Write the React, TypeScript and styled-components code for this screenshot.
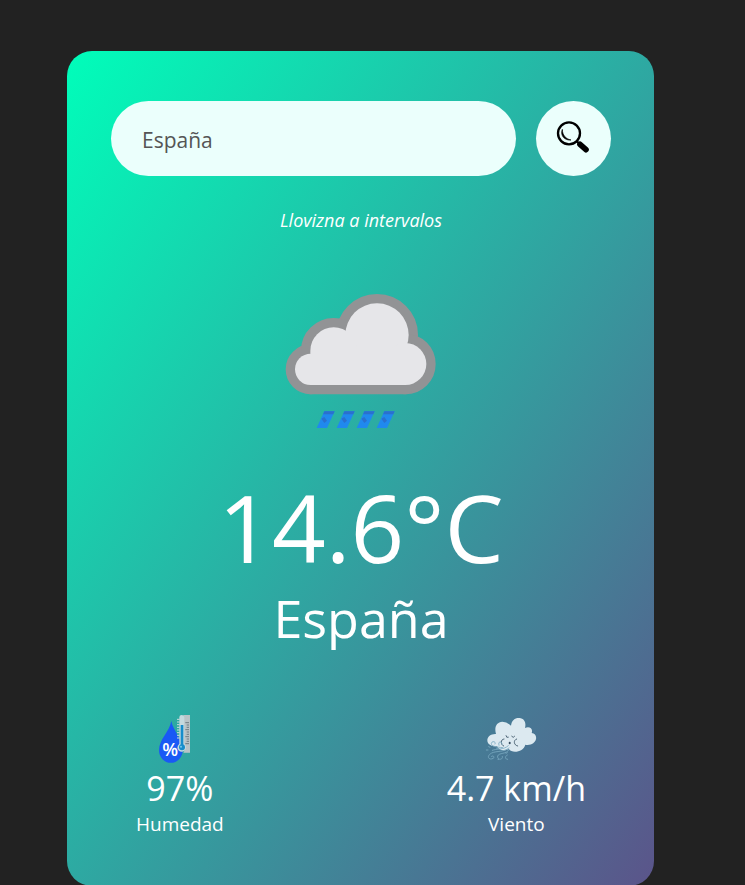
import React, { useState } from "react";
import styled, { createGlobalStyle } from "styled-components";

const GlobalStyle = createGlobalStyle`
  * {
    box-sizing: border-box;
    margin: 0;
    padding: 0;
  }
  body {
    background: #222;
    font-family: "Segoe UI", "Open Sans", "Noto Sans", sans-serif;
  }
`;

const Page = styled.main`
  padding: 51px 24px 0 0;
`;

const Card = styled.section`
  width: 90%;
  max-width: 587px;
  margin: 0 auto;
  padding: 50px 43px 48px 44px;
  border-radius: 25px;
  background: linear-gradient(to bottom right, #00feba, #5b548a);
  color: #fff;
  text-align: center;
`;

const SearchForm = styled.form`
  display: flex;
  align-items: center;
  gap: 20px;
`;

const SearchInput = styled.input`
  flex: 1;
  min-width: 0;
  height: 75px;
  padding: 2px 31px 0;
  border: 0;
  outline: 0;
  border-radius: 38px;
  background: #ebfffc;
  color: #555;
  font-family: inherit;
  font-size: 21px;
`;

const SearchButton = styled.button`
  display: flex;
  align-items: center;
  justify-content: center;
  width: 75px;
  height: 75px;
  flex-shrink: 0;
  border: 0;
  border-radius: 50%;
  background: #ebfffc;
  cursor: pointer;
`;

const Condition = styled.p`
  margin-top: 31px;
  font-size: 18px;
  font-style: italic;
  line-height: 26px;
`;

const ConditionIcon = styled.svg`
  display: block;
  width: 160px;
  height: 160px;
  margin: 48px auto 32px;
`;

const Temperature = styled.h1`
  font-size: 94px;
  font-weight: 400;
  line-height: 108px;
`;

const City = styled.h2`
  font-size: 52px;
  font-weight: 400;
  line-height: 74px;
`;

const Details = styled.div`
  display: flex;
  justify-content: space-between;
  margin-top: 59px;
  padding: 0 25px;
`;

const Detail = styled.div`
  display: flex;
  flex-direction: column;
  align-items: center;
`;

const DetailIcon = styled.svg<{ $width: number }>`
  width: ${(p) => p.$width}px;
  height: 50px;
  margin: 0 10px 2px 0;
`;

const DetailValue = styled.p`
  font-size: 34px;
  line-height: 44px;
`;

const DetailLabel = styled.p`
  font-size: 19px;
  line-height: 28px;
`;

const CloudShape = () => (
  <>
    <circle cx="320" cy="165" r="95" />
    <circle cx="405" cy="252" r="63" />
    <circle cx="121" cy="268" r="47" />
    <circle cx="190" cy="212" r="70" />
    <rect x="121" y="215" width="284" height="100" />
  </>
);

const DrizzleIcon = () => (
  <ConditionIcon viewBox="32 3 480 480" aria-hidden="true">
    <g fill="#929395" stroke="#929395" strokeWidth="56" strokeLinejoin="round">
      <CloudShape />
    </g>
    <g fill="#e6e6e9">
      <CloudShape />
    </g>
    {[0, 60, 120, 180].map((x) => (
      <g key={x} transform={`translate(${x} 0)`}>
        <path d="M162 394h31l-23 50h-31z" fill="#2089ee" />
        <path d="M162 394h31l-4 9h-31zM153 416l9-5 8 11-8 7z" fill="#2a70ce" />
      </g>
    ))}
  </ConditionIcon>
);

const MagnifierIcon = () => (
  <svg width="36" height="36" viewBox="78 76 108 108" aria-hidden="true">
    <circle cx="117" cy="113" r="33" fill="none" stroke="#000" strokeWidth="7" />
    <path d="M97 101c-7 17 5 34 26 32-15-3-26-14-26-32z" fill="#000" stroke="#000" strokeWidth="2" />
    <path d="M139 136l9 8" stroke="#000" strokeWidth="7" />
    <path d="M150 146l18 16" stroke="#000" strokeWidth="17" strokeLinecap="round" />
  </svg>
);

const HumidityIcon = () => (
  <DetailIcon $width={33} viewBox="84 27 99 150" aria-hidden="true">
    <path d="M160 30h20v113h-20q7-8 0-16z" fill="#b9c3c7" />
    <path
      d="M166 53h11M170 60h7M170 67h7M166 74h11M170 81h7M170 88h7M166 95h11M170 102h7M170 109h7M166 116h11"
      stroke="#4b5961"
      strokeWidth="2"
    />
    <path d="M124 48c4 27 34 55 34 88a35 37 0 0 1-71 0c0-33 31-55 37-88z" fill="#1959f5" />
    <path d="M141 43h8M141 51h8M141 59h8M141 67h8M141 75h8M141 83h8M141 91h8M141 99h8" stroke="#cadadd" strokeWidth="3" />
    <path d="M148 37q0-7 7-7t8 7v79q6 5 5 13-3 11-13 11t-13-11q0-8 6-13z" fill="#c5d9de" />
    <path d="M156 60v62" stroke="#168dcb" strokeWidth="8" />
    <circle cx="156" cy="127" r="9" fill="#168dcb" />
    <circle cx="153" cy="125" r="3" fill="#75c9ed" />
    <text x="97" y="153" fill="#fff" fontFamily="Open Sans, sans-serif" fontSize="55" fontWeight="600">%</text>
  </DetailIcon>
);

const WindIcon = () => (
  <DetailIcon $width={52} viewBox="135 27 156 150" aria-hidden="true">
    <path
      d="M168 87C162 66 170 51 187 50q13 0 26 12c2-16 12-24 25-23 16 1 21 15 17 30 13-7 25 2 20 15 10 1 15 9 13 18-2 12-16 20-32 17-5 21-38 28-50 13-13 8-30 4-35-8-15 1-29-5-29-18 0-11 11-20 26-19z"
      fill="#dce9f0"
    />
    <g fill="none" stroke="#354d60" strokeWidth="2.5" strokeLinecap="round">
      <path d="M198 92q1 8 7 5M215 94q5 7 9 0" />
      <path d="M192 102c-11 0-11 18-1 21M230 102c-11 3-9 19 3 21" />
    </g>
    <ellipse cx="209" cy="114" rx="3" ry="4" fill="#354d60" />
    <g fill="none" stroke="#79a9c0" strokeWidth="2.5" strokeLinecap="round">
      <path d="M205 122c-15 14-35 8-48 14M207 129c-16 13-36 8-52 15-18 10-8 23 5 16 5-6-3-10-6-5M207 134c-8 15-30 8-34 19-2 14 18 12 14 1" />
      <path d="M188 128c-19-2-35-4-34-13 2-9 16-5 11 2M177 121c-5-15 12-12 9-3M202 150c-8 4-8 13 1 13" />
      <path d="M139 135h5M146 125l4 2M170 130h5M174 163h2M198 145l4-2" />
    </g>
  </DetailIcon>
);

export default function App() {
  const [query, setQuery] = useState("España");

  return (
    <>
      <GlobalStyle />
      <Page>
        <Card>
          <SearchForm onSubmit={(e: React.FormEvent) => e.preventDefault()}>
            <SearchInput
              type="text"
              aria-label="Ciudad"
              spellCheck={false}
              value={query}
              onChange={(e: React.ChangeEvent<HTMLInputElement>) => setQuery(e.target.value)}
            />
            <SearchButton type="submit" aria-label="Buscar">
              <MagnifierIcon />
            </SearchButton>
          </SearchForm>
          <Condition>Llovizna a intervalos</Condition>
          <DrizzleIcon />
          <Temperature>14.6°C</Temperature>
          <City>España</City>
          <Details>
            <Detail>
              <HumidityIcon />
              <DetailValue>97%</DetailValue>
              <DetailLabel>Humedad</DetailLabel>
            </Detail>
            <Detail>
              <WindIcon />
              <DetailValue>4.7 km/h</DetailValue>
              <DetailLabel>Viento</DetailLabel>
            </Detail>
          </Details>
        </Card>
      </Page>
    </>
  );
}
